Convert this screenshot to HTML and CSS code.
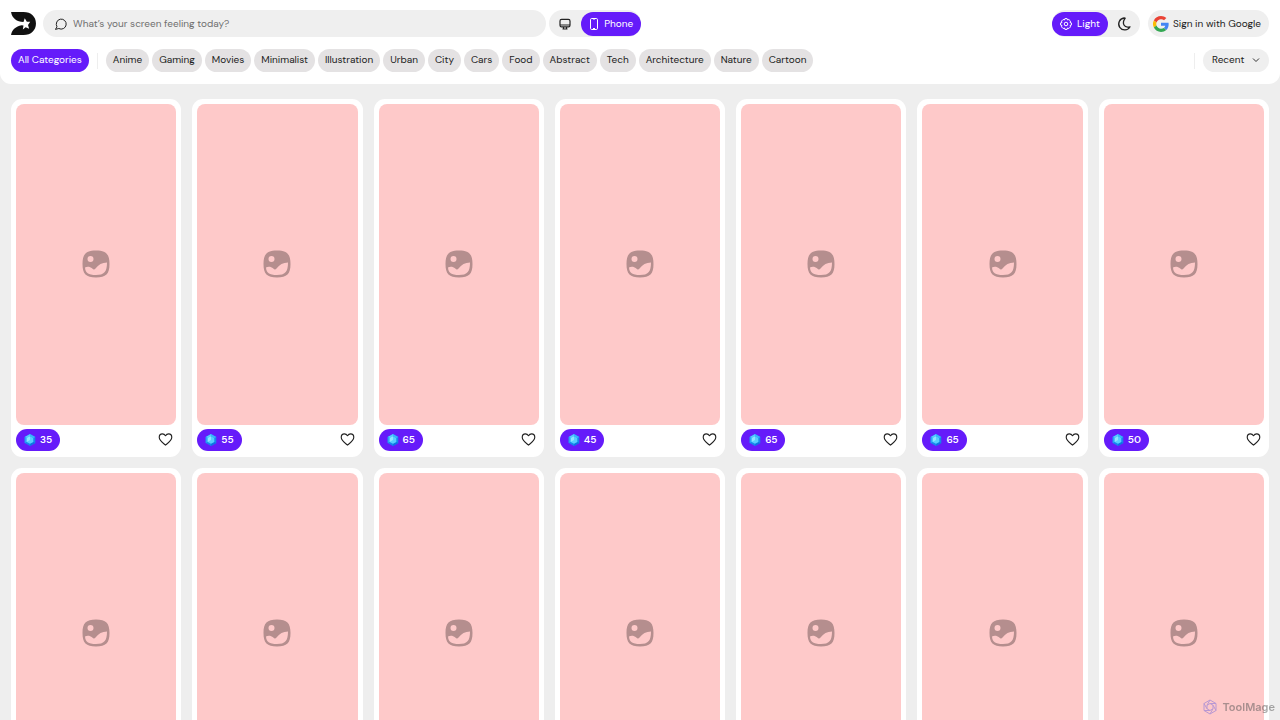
FILE: index.html
```html
<!DOCTYPE html>
<html lang="en">
<head>
<meta charset="utf-8">
<meta name="viewport" content="width=device-width, initial-scale=1">
<title>Wallpapers</title>
<link rel="stylesheet" href="styles.css">
</head>
<body>
<svg class="sprite" aria-hidden="true">
  <symbol id="picture" viewBox="0 0 28 28">
    <path fill-rule="evenodd" d="M14 0.500C24 0.500 27.500 4 27.500 14S24 27.500 14 27.500 0.500 24 0.500 14 4 0.500 14 0.500ZM3 17.500C3.500 23 6 25 14 25C22 25 25 22 25 12.500C20 12.500 16.500 14.500 13.500 18.500C12.500 19.700 11.500 19.700 10.300 18.500C8 16.500 5 16.500 3 17.500ZM8.500 6A3 3 0 1 0 8.500 12A3 3 0 1 0 8.500 6Z"/>
  </symbol>
  <symbol id="gem" viewBox="0 0 12 12">
    <path fill="#1687ee" d="M6 0 11.300 3V9L6 12 .7 9V3Z"/>
    <path fill="#55ccff" d="M6 0 .7 3 2.700 4 6 2.200Z"/>
    <path fill="#2ba4f7" d="M.7 3V9L2.700 7.900V4Z"/>
    <path fill="#37b7fb" d="M6 0 11.300 3 9.300 4 6 2.200Z"/>
    <path fill="#0d74e2" d="M11.300 9 6 12V9.800L9.300 7.900Z"/>
    <path fill="#56cdff" d="M6 2.200 9.300 4V7.900L6 9.800 2.700 7.900V4Z"/>
    <path fill="#8ce6ff" d="M6 2.200 2.700 4V7.900L6 6Z"/>
  </symbol>
  <symbol id="heart" viewBox="0 0 16 16">
    <path fill="none" stroke="#202020" stroke-width="1.200" stroke-linejoin="round" d="M8 14C6 12.400 1.300 9.300 1.300 5.700C1.300 3.300 2.900 2 4.700 2C6.200 2 7.300 2.900 8 4C8.700 2.900 9.800 2 11.300 2C13.100 2 14.700 3.300 14.700 5.700C14.700 9.300 10 12.400 8 14Z"/>
  </symbol>
</svg>

<header class="header">
  <div class="topbar">
    <a class="logo" href="#" aria-label="Home">
      <svg viewBox="0 0 26 24" width="25" height="23"><path fill="#111" d="M0 0H13C21 0 26 5 26 12S21 24 13 24H0C1 18 5 15 11 13.700L13 14 12.300 18.200 15.200 15.800 18.900 17.500 17.700 13.500 20 10.300 16.500 10.200 14.300 6.500 13 10.500C6 10.200 1 6.500 0 0Z"/></svg>
    </a>
    <label class="search">
      <svg viewBox="0 0 12 12" width="12" height="12"><path fill="none" stroke="#222" stroke-linecap="round" stroke-linejoin="round" d="M1.800 8.500A5 5 0 1 1 3.800 10.500L.8 11.300Z"/></svg>
      <input type="text" aria-label="Search wallpapers" placeholder="What’s your screen feeling today?">
    </label>
    <div class="toggle">
      <button class="segment" aria-label="Desktop"><svg viewBox="0 0 12 12" width="12" height="12" fill="none" stroke="#222" stroke-width="1.200"><rect x="1" y="1.300" width="10" height="7.500" rx="1.600"/><path d="M1 7H11M4.500 9V10.800M7.500 9V10.800M3.500 11H8.500"/></svg></button>
      <button class="segment active"><svg viewBox="0 0 10 12" width="10" height="12" fill="none" stroke="#fff"><rect x="1.500" y=".5" width="7" height="11" rx="1.200"/><path d="M4 1H6M4 10.500H6"/></svg>Phone</button>
    </div>
    <div class="toggle theme">
      <button class="segment active"><svg viewBox="0 0 12 12" width="12" height="12" fill="none" stroke="#fff" stroke-linejoin="round"><path d="M4.900 .6H7.100L7.500 2 8.900 1.500 10.500 3.100 10 4.500 11.400 4.900V7.100L10 7.500 10.500 8.900 8.900 10.500 7.500 10 7.100 11.400H4.900L4.500 10 3.100 10.500 1.500 8.900 2 7.500 .6 7.100V4.900L2 4.500 1.500 3.100 3.100 1.500 4.500 2Z"/><circle cx="6" cy="6" r="1.800"/></svg>Light</button>
      <button class="segment" aria-label="Dark"><svg viewBox="0 0 14 14" width="14" height="14" fill="none" stroke="#222" stroke-width="1.300" stroke-linejoin="round"><path d="M7 1A6 6 0 1 0 13 9.800C7 11.500 4.500 6.300 8.200 1.200Z"/></svg></button>
    </div>
    <button class="google">
      <svg viewBox="0 0 48 48" width="16" height="16"><path fill="#ea4335" d="M24 9.500c3.540 0 6.710 1.220 9.210 3.600l6.850-6.850C35.900 2.380 30.470 0 24 0 14.620 0 6.510 5.380 2.560 13.220l7.980 6.190C12.430 13.720 17.740 9.500 24 9.500z"/><path fill="#4285f4" d="M46.980 24.550c0-1.570-.15-3.090-.38-4.550H24v9.020h12.940c-.58 2.960-2.260 5.480-4.780 7.180l7.730 6c4.510-4.180 7.090-10.360 7.090-17.650z"/><path fill="#fbbc05" d="M10.530 28.590A14.500 14.500 0 0 1 10.530 19.410l-7.980-6.190a24 24 0 0 0 0 21.560z"/><path fill="#34a853" d="M24 48c6.480 0 11.930-2.130 15.890-5.810l-7.730-6c-2.150 1.450-4.920 2.300-8.160 2.300-6.260 0-11.570-4.220-13.470-9.910l-7.980 6.190C6.510 42.620 14.620 48 24 48z"/></svg>
      Sign in with Google
    </button>
  </div>
  <nav class="filters" aria-label="Categories">
    <button class="chip selected">All Categories</button>
    <span class="divider"></span>
    <div class="chips">
      <button class="chip">Anime</button>
      <button class="chip">Gaming</button>
      <button class="chip">Movies</button>
      <button class="chip">Minimalist</button>
      <button class="chip">Illustration</button>
      <button class="chip">Urban</button>
      <button class="chip">City</button>
      <button class="chip">Cars</button>
      <button class="chip">Food</button>
      <button class="chip">Abstract</button>
      <button class="chip">Tech</button>
      <button class="chip">Architecture</button>
      <button class="chip">Nature</button>
      <button class="chip">Cartoon</button>
    </div>
    <div class="sorting">
      <span class="divider"></span>
      <div class="sort">
        <select aria-label="Sort order"><option>Recent</option></select>
        <svg viewBox="0 0 8 8" width="8" height="8"><path fill="none" stroke="#333" d="M1 2.500 4 5.500 7 2.500"/></svg>
      </div>
    </div>
  </nav>
</header>

<main class="gallery">
  <article class="card"><div class="thumb"><svg><use href="#picture"/></svg></div><div class="meta"><span class="price"><svg><use href="#gem"/></svg>35</span><button class="like" aria-label="Like"><svg><use href="#heart"/></svg></button></div></article>
  <article class="card"><div class="thumb"><svg><use href="#picture"/></svg></div><div class="meta"><span class="price"><svg><use href="#gem"/></svg>55</span><button class="like" aria-label="Like"><svg><use href="#heart"/></svg></button></div></article>
  <article class="card"><div class="thumb"><svg><use href="#picture"/></svg></div><div class="meta"><span class="price"><svg><use href="#gem"/></svg>65</span><button class="like" aria-label="Like"><svg><use href="#heart"/></svg></button></div></article>
  <article class="card"><div class="thumb"><svg><use href="#picture"/></svg></div><div class="meta"><span class="price"><svg><use href="#gem"/></svg>45</span><button class="like" aria-label="Like"><svg><use href="#heart"/></svg></button></div></article>
  <article class="card"><div class="thumb"><svg><use href="#picture"/></svg></div><div class="meta"><span class="price"><svg><use href="#gem"/></svg>65</span><button class="like" aria-label="Like"><svg><use href="#heart"/></svg></button></div></article>
  <article class="card"><div class="thumb"><svg><use href="#picture"/></svg></div><div class="meta"><span class="price"><svg><use href="#gem"/></svg>65</span><button class="like" aria-label="Like"><svg><use href="#heart"/></svg></button></div></article>
  <article class="card"><div class="thumb"><svg><use href="#picture"/></svg></div><div class="meta"><span class="price"><svg><use href="#gem"/></svg>50</span><button class="like" aria-label="Like"><svg><use href="#heart"/></svg></button></div></article>
  <article class="card"><div class="thumb"><svg><use href="#picture"/></svg></div></article>
  <article class="card"><div class="thumb"><svg><use href="#picture"/></svg></div></article>
  <article class="card"><div class="thumb"><svg><use href="#picture"/></svg></div></article>
  <article class="card"><div class="thumb"><svg><use href="#picture"/></svg></div></article>
  <article class="card"><div class="thumb"><svg><use href="#picture"/></svg></div></article>
  <article class="card"><div class="thumb"><svg><use href="#picture"/></svg></div></article>
  <article class="card"><div class="thumb"><svg><use href="#picture"/></svg></div></article>
</main>

<div class="watermark">
  <svg viewBox="0 0 16 16" width="16" height="16" fill="none" stroke="#7468dc"><path d="M8 1 14 4.500V11.500L8 15 2 11.500V4.500Z"/><path d="M8 4.500 11 6.200V9.800L8 11.500 5 9.800V6.200ZM8 1 5 6.200M14 4.500H8M14 11.500 11 6.200M8 15 11 9.800M2 11.500H8M2 4.500 5 9.800"/></svg>
  ToolMage
</div>
</body>
</html>
```
FILE: styles.css
```css
* { box-sizing: border-box; }

body {
  margin: 0;
  height: 100vh;
  overflow: hidden;
  background: #eee;
  color: #222;
  font: 10px/14px "DM Sans", Inter, sans-serif;
}

button, input, select {
  margin: 0;
  padding: 0;
  border: 0;
  background: none;
  color: inherit;
  font: inherit;
}

svg { display: block; flex: none; }
.sprite { position: absolute; width: 0; height: 0; }

.header {
  height: 84px;
  padding: 10px 11px 0;
  border-radius: 0 0 11px 11px;
  background: #fff;
}

.topbar { display: flex; align-items: center; height: 27px; }
.logo { margin-right: 7px; }

.search {
  display: flex;
  align-items: center;
  gap: 6px;
  width: 40%;
  height: 27px;
  padding: 0 12px;
  border-radius: 14px;
  background: #efefef;
}
.search input { flex: 1; outline: 0; }
.search input::placeholder { color: #707070; opacity: 1; }

.toggle {
  display: flex;
  align-items: center;
  height: 27px;
  margin-left: 3px;
  border-radius: 14px;
  background: #efefef;
}
.segment {
  display: flex;
  align-items: center;
  justify-content: center;
  gap: 5px;
  height: 24px;
  padding: 0 10px;
  border-radius: 12px;
}
.theme { margin-left: auto; }
.theme .segment { padding: 0 9px; }
.toggle .active { padding: 0 8px; background: #651bfa; color: #fff; }

.google {
  display: flex;
  align-items: center;
  gap: 4px;
  height: 27px;
  margin-left: 8px;
  padding: 0 8px 0 5px;
  border-radius: 14px;
  background: #efefef;
}

.filters { display: flex; align-items: center; margin-top: 12px; }
.chips { display: flex; gap: 3px; }
.chip {
  height: 23px;
  padding: 0 7px 1px;
  border-radius: 12px;
  background: #e4e2e3;
  white-space: nowrap;
}
.chip.selected { background: #651bfa; color: #fff; }
.divider { width: 1px; height: 16px; margin: 0 8px; background: #eee; }
.sorting { display: flex; align-items: center; margin-left: auto; }
.sort {
  display: flex;
  align-items: center;
  gap: 7px;
  height: 23px;
  padding: 0 9px 1px;
  border-radius: 12px;
  background: #efefef;
}
.sort select { appearance: none; outline: 0; }

.gallery {
  display: grid;
  grid-template-columns: repeat(7, 1fr);
  gap: 11px;
  padding: 15px 11px;
}
.card { padding: 5px; border-radius: 11px; background: #fff; }
.thumb {
  display: grid;
  place-items: center;
  aspect-ratio: 1 / 2;
  border-radius: 8px;
  background: #fec9c9;
}
.thumb svg { width: 28px; height: 28px; fill: #b58e8e; }
.meta {
  display: flex;
  align-items: center;
  justify-content: space-between;
  padding: 4px 3px 1px 0;
}
.price {
  display: flex;
  align-items: center;
  gap: 4px;
  height: 22px;
  padding: 0 8px;
  border-radius: 11px;
  background: #651bfa;
  color: #fff;
  font-weight: 600;
}
.price svg { width: 12px; height: 12px; }
.like svg { width: 15px; height: 15px; }

.watermark {
  position: fixed;
  right: 5px;
  bottom: 5px;
  display: flex;
  align-items: center;
  gap: 4px;
  color: #555;
  font: 600 11px/16px Inter, sans-serif;
  opacity: 0.5;
}
```
